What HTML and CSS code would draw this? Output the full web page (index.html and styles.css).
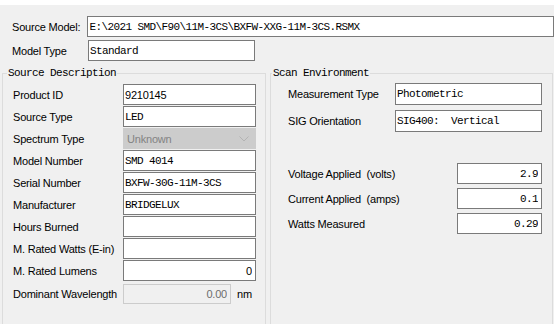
FILE: index.html
```html
<!DOCTYPE html>
<html lang="en">
<head>
  <meta charset="utf-8"/>
  <meta name="viewport" content="width=device-width, initial-scale=1.0"/>
  <title>Source Model</title>
  <link rel="stylesheet" href="styles.css">
</head>
<body>
  <div class="strip"></div>

  <div class="head">
    <div class="row">
      <span class="lbl lbl-head">Source Model:</span>
      <input class="box mono wide" value="E:\2021 SMD\F90\11M-3CS\BXFW-XXG-11M-3CS.RSMX" readonly>
    </div>
    <div class="row">
      <span class="lbl lbl-head">Model Type</span>
      <input class="box mono type" value="Standard" readonly>
    </div>
  </div>

  <div class="groups">
    <fieldset class="group group-left">
      <legend>Source Description</legend>
      <div class="row"><span class="lbl lbl-left">Product ID</span><input class="box sans field-left" value="9210145" readonly></div>
      <div class="row"><span class="lbl lbl-left">Source Type</span><input class="box mono field-left" value="LED" readonly></div>
      <div class="row">
        <span class="lbl lbl-left">Spectrum Type</span>
        <div class="combo field-left">
          <span>Unknown</span>
          <svg width="10" height="6" viewBox="0 0 10 6"><path d="M0.5 0.5 L5 5 L9.5 0.5" fill="none" stroke="#b3b3b3" stroke-width="1"/></svg>
        </div>
      </div>
      <div class="row"><span class="lbl lbl-left">Model Number</span><input class="box mono field-left" value="SMD 4014" readonly></div>
      <div class="row"><span class="lbl lbl-left">Serial Number</span><input class="box mono field-left" value="BXFW-30G-11M-3CS" readonly></div>
      <div class="row"><span class="lbl lbl-left">Manufacturer</span><input class="box mono field-left" value="BRIDGELUX" readonly></div>
      <div class="row"><span class="lbl lbl-left">Hours Burned</span><input class="box mono field-left" value="" readonly></div>
      <div class="row"><span class="lbl lbl-left">M. Rated Watts (E-in)</span><input class="box mono field-left" value="" readonly></div>
      <div class="row"><span class="lbl lbl-left">M. Rated Lumens</span><input class="box sans field-left num" value="0" readonly></div>
      <div class="row row-dw">
        <span class="lbl lbl-left">Dominant Wavelength</span>
        <input class="box sans field-dw num" value="0.00" disabled>
        <span class="lbl unit">nm</span>
      </div>
    </fieldset>

    <fieldset class="group group-right">
      <legend>Scan Environment</legend>
      <div class="row row-env"><span class="lbl lbl-right">Measurement Type</span><input class="box mono field-right" value="Photometric" readonly></div>
      <div class="row row-env"><span class="lbl lbl-right">SIG Orientation</span><input class="box mono field-right" value="SIG400:  Vertical" readonly></div>
      <div class="elec">
        <div class="row"><span class="lbl lbl-elec">Voltage Applied&nbsp; (volts)</span><input class="box mono field-elec num" value="2.9" readonly></div>
        <div class="row"><span class="lbl lbl-elec">Current Applied&nbsp; (amps)</span><input class="box mono field-elec num" value="0.1" readonly></div>
        <div class="row"><span class="lbl lbl-elec">Watts Measured</span><input class="box mono field-elec num" value="0.29" readonly></div>
      </div>
    </fieldset>
  </div>
</body>
</html>
```

FILE: styles.css
```css
html, body { margin: 0; height: 324px; overflow: hidden; }
body {
  background: #f0f0f0;
  font-family: "Liberation Sans", Arial, sans-serif;
  font-size: 11px;
  color: #000;
  display: flex;
  flex-direction: column;
}
.strip { height: 5px; background: #fff; flex: none; }

.head { padding: 11px 0 0 12px; display: flex; flex-direction: column; gap: 3px; }
.row { display: flex; align-items: center; }

.lbl { letter-spacing: -0.2px; white-space: nowrap; }
.lbl-head { width: 76px; }
.lbl-left { width: 110px; }
.lbl-right { width: 107px; }
.lbl-elec { width: 169px; }
.unit { margin-left: 6px; }

.box {
  box-sizing: border-box;
  height: 21px;
  margin: 0;
  padding: 0 3px 0 1px;
  border: 1px solid #7a7a7a;
  background: #fff;
  color: #000;
  outline: none;
}
.mono { font-family: "Liberation Mono", "Courier New", monospace; font-size: 11px; letter-spacing: -0.6px; }
.sans { font-family: "Liberation Sans", Arial, sans-serif; font-size: 11px; letter-spacing: -0.2px; }
.num { text-align: right; }
.wide { width: 470px; }
.type { width: 167px; }

/* group boxes run past the bottom of the window */
.groups { flex: 1; min-height: 0; display: flex; gap: 4px; padding: 5px 0 0 2px; }
.group {
  margin: 0;
  border: 1px solid #dcdcdc;
  border-bottom: none;
  box-sizing: border-box;
  min-height: 0;
}
.group legend {
  font-family: "Liberation Mono", "Courier New", monospace;
  font-size: 11px;
  letter-spacing: -0.6px;
  line-height: 14px;
  padding: 0 1px;
}
.group-left { width: 264px; padding: 4px 0 0 10px; display: flex; flex-direction: column; gap: 1px; }
.group-left legend { margin-left: -6px; }
.group-right { width: 283px; padding: 3px 0 0 17px; }
.group-right legend { margin-left: -16px; }

.field-left { width: 133px; flex: none; }
.combo {
  box-sizing: border-box;
  height: 21px;
  background: #cccccc;
  border: 1px solid #cccccc;
  color: #838383;
  display: flex;
  align-items: center;
  justify-content: space-between;
  padding: 0 6px 0 3px;
  letter-spacing: -0.2px;
}
.row-dw { margin-top: 2px; }
.field-dw {
  width: 108px;
  height: 20px;
  background: #f0f0f0;
  border-color: #cccccc;
  color: #6d6d6d;
}

.row-env { margin-bottom: 5px; }
.field-right { width: 147px; height: 22px; }
.elec { margin-top: 31px; display: flex; flex-direction: column; gap: 4px; }
.field-elec { width: 85px; }
```
